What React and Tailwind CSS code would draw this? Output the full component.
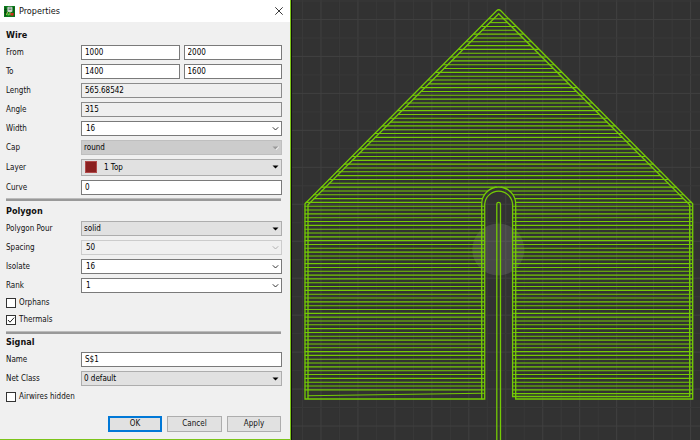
import { useState } from 'react';

const GREEN = '#74cb04';

const fieldBase =
  'h-[15px] w-full min-w-0 rounded-none border px-[3px] text-[8px] leading-3 text-black outline-none';

const Field = ({ id, label, children }) => (
  <div className="flex items-center">
    <label htmlFor={id} className="w-[75px] shrink-0 leading-3">{label}</label>
    <div className="flex min-w-0 flex-1 gap-1">{children}</div>
  </div>
);

const TextBox = ({ readOnly, ...props }) => (
  <input
    type="text"
    readOnly={readOnly}
    className={`${fieldBase} ${readOnly ? 'border-[#8c8c8c] bg-[#efefef]' : 'border-[#7a7a7a] bg-white'}`}
    {...props}
  />
);

// editable combos have a thin chevron, plain drop-downs a filled triangle
const Combo = ({ id, options, disabled }) => (
  <div className="relative w-full">
    <select
      id={id}
      disabled={disabled}
      className={`block h-[15px] w-full appearance-none border pl-1 pr-4 text-[8px] leading-[13px] text-black opacity-100 outline-none ${
        disabled ? 'border-[#cccccc] bg-[#f0f0f0]' : 'border-[#7a7a7a] bg-white'
      }`}
    >
      {options.map((o) => <option key={o}>{o}</option>)}
    </select>
    <svg className="pointer-events-none absolute right-[3px] top-[5px] h-[6px] w-[7px]" viewBox="0 0 7 6" fill="none" stroke={disabled ? '#b0b0b0' : '#333333'}>
      <path d="M.8 1.3 3.5 4 6.2 1.3" />
    </svg>
  </div>
);

const DropDown = ({ id, options, disabled, swatch }) => (
  <div className="relative w-full">
    <select
      id={id}
      disabled={disabled}
      className={`block w-full appearance-none border pr-4 text-[8px] text-black opacity-100 outline-none ${
        swatch ? 'h-[17px] pl-[22px] leading-[15px]' : 'h-[15px] pl-[2px] leading-[13px]'
      } ${disabled ? 'border-[#bfbfbf] bg-[#cccccc]' : 'border-[#adadad] bg-[#e1e1e1]'}`}
    >
      {options.map((o) => <option key={o}>{o}</option>)}
    </select>
    {swatch && <span className="pointer-events-none absolute left-1 top-[2px] size-3 border border-[#b04a4a] bg-[#8b2020]" />}
    <svg className="pointer-events-none absolute right-[3px] top-[6px] h-[4px] w-[7px]" viewBox="0 0 7 4">
      <path d="M.5 .5H6.5L3.5 3.5Z" fill={disabled ? '#9a9a9a' : '#000000'} />
      {disabled && <path d="M3.5 4 6.8 .8" stroke="#ffffff" />}
    </svg>
  </div>
);

const CheckBox = ({ label, checked, onChange }) => (
  <label className="flex items-center gap-[3px] leading-[10px]">
    <span className="relative size-[10px]">
      <input
        type="checkbox"
        checked={checked}
        onChange={(e) => onChange(e.target.checked)}
        className="block size-[10px] appearance-none border border-[#333333] bg-white"
      />
      {checked && (
        <svg className="pointer-events-none absolute inset-0" viewBox="0 0 10 10" fill="none" stroke="#222222">
          <path d="M2 5 4 7.2 8.2 2.6" />
        </svg>
      )}
    </span>
    {label}
  </label>
);

const Heading = ({ children }) => <h2 className="text-[9px] font-bold leading-3">{children}</h2>;

const Rule = () => <hr className="mr-px h-[3px] border-0 border-t border-[#bcbcbc] bg-[#999999]" />;

const AppIcon = () => (
  <svg className="size-[11px]" viewBox="0 0 11 11">
    <rect width="11" height="11" fill="#0c7a1c" />
    <path d="M1.5 1v9M0 3.5h3M0 6.5h3M9.8 1v9" stroke="#064a10" strokeWidth=".8" />
    <rect x="3.4" y=".8" width="5" height="5.2" rx="1" fill="#c8d4cc" />
    <path d="M4.6 2h2.8M4.6 3.5h2.8" stroke="#4d6355" strokeWidth=".7" />
    <path d="M3.5 6 2.5 9M6 6v3" stroke="#e8e060" strokeWidth=".8" />
    <rect x="6.6" y="7" width="3" height="2.6" fill="#d52a1a" />
    <rect x="3.6" y="7.6" width="1.8" height="1.8" fill="#59d14a" />
  </svg>
);

const PropertiesDialog = () => {
  const [orphans, setOrphans] = useState(false);
  const [thermals, setThermals] = useState(true);
  const [airwires, setAirwires] = useState(false);

  return (
    <form
      onSubmit={(e) => e.preventDefault()}
      className="flex w-[291px] shrink-0 flex-col border-b border-r border-[#7cc41a] bg-[#f0f0f0] text-[8px] text-[#111111]"
    >
      <header className="flex h-[22px] items-center gap-1 bg-white pl-1 pr-[7px]">
        <AppIcon />
        <h1 className="text-[9px] leading-3">Properties</h1>
        <button type="button" aria-label="Close" className="ml-auto">
          <svg className="size-2" viewBox="0 0 8 8" stroke="#222222" strokeWidth=".9">
            <path d="M.3 .3 7.7 7.7M7.7 .3 .3 7.7" />
          </svg>
        </button>
      </header>

      <div className="flex flex-col pb-[7px] pl-[6px] pr-2 pt-[7px]">
        <section className="flex flex-col gap-1 pb-[3px]">
          <Heading>Wire</Heading>
          <Field id="from" label="From">
            <TextBox id="from" defaultValue="1000" />
            <TextBox aria-label="From y" defaultValue="2000" />
          </Field>
          <Field id="to" label="To">
            <TextBox id="to" defaultValue="1400" />
            <TextBox aria-label="To y" defaultValue="1600" />
          </Field>
          <Field id="length" label="Length"><TextBox id="length" readOnly defaultValue="565.68542" /></Field>
          <Field id="angle" label="Angle"><TextBox id="angle" readOnly defaultValue="315" /></Field>
          <Field id="width" label="Width"><Combo id="width" options={['16']} /></Field>
          <Field id="cap" label="Cap"><DropDown id="cap" disabled options={['round']} /></Field>
          <Field id="layer" label="Layer"><DropDown id="layer" swatch options={['1 Top']} /></Field>
          <Field id="curve" label="Curve"><TextBox id="curve" defaultValue="0" /></Field>
        </section>
        <Rule />

        <section className="flex flex-col gap-1 pb-[6px] pt-1">
          <Heading>Polygon</Heading>
          <Field id="pour" label="Polygon Pour"><DropDown id="pour" options={['solid']} /></Field>
          <Field id="spacing" label="Spacing"><Combo id="spacing" disabled options={['50']} /></Field>
          <Field id="isolate" label="Isolate"><Combo id="isolate" options={['16']} /></Field>
          <Field id="rank" label="Rank"><Combo id="rank" options={['1']} /></Field>
          <div className="flex flex-col gap-[7px] pt-px">
            <CheckBox label="Orphans" checked={orphans} onChange={setOrphans} />
            <CheckBox label="Thermals" checked={thermals} onChange={setThermals} />
          </div>
        </section>
        <Rule />

        <section className="flex flex-col gap-1 pt-[2px]">
          <Heading>Signal</Heading>
          <Field id="name" label="Name"><TextBox id="name" defaultValue="S$1" /></Field>
          <Field id="netclass" label="Net Class"><DropDown id="netclass" options={['0 default']} /></Field>
          <div className="pt-[2px]">
            <CheckBox label="Airwires hidden" checked={airwires} onChange={setAirwires} />
          </div>
        </section>

        <footer className="mr-px mt-[14px] flex justify-end gap-[5px]">
          <button type="submit" className="h-4 w-[54px] border-2 border-[#0078d7] bg-[#e1e1e1] leading-none">OK</button>
          <button type="button" className="h-4 w-[55px] border border-[#adadad] bg-[#e1e1e1] leading-none">Cancel</button>
          <button type="button" className="h-4 w-[54px] border border-[#adadad] bg-[#e1e1e1] leading-none">Apply</button>
        </footer>
      </div>
    </form>
  );
};

const CX = 207.7;

// horizontal fill strokes of the pour, split in two below the top of the slot
const hatch = [];
for (let n = 0; n < 99; n++) {
  const y = 18.8 + n * 3.825;
  const inset = n % 2 ? 4 : 0;
  const half = y < 204 ? y - 9.3 - inset : 194;
  if (y < 187) {
    hatch.push([CX - half, CX + half, y]);
    continue;
  }
  const slot = y < 204 ? Math.sqrt(289 - (204 - y) ** 2) : 14;
  if (n < 98) hatch.push([CX - half, CX - slot, y]);
  hatch.push([CX + slot, CX + half, y]);
}

const gridX = Array.from({ length: 22 }, (_, i) => 11.5 + i * 18.48);
const gridY = Array.from({ length: 24 }, (_, i) => 1 + i * 18.48);

const Board = () => (
  <main className="relative min-w-0 flex-1 bg-[#323232]">
    <svg className="absolute inset-0 h-full w-full" viewBox="0 0 409 440" preserveAspectRatio="xMinYMin slice">
      {gridX.map((x, i) => (
        <path key={x} d={`M${x} 0V440`} stroke={i % 2 ? '#404040' : '#393939'} />
      ))}
      {gridY.map((y, i) => (
        <path key={y} d={`M0 ${y}H409`} stroke={i % 2 ? '#404040' : '#393939'} />
      ))}
      <path d="M.5 0V440" stroke="#111111" />
      <circle cx="207.3" cy="249.5" r="26" fill="#ffffff" opacity=".11" />
      <g stroke={GREEN} strokeWidth="1.1" fill="none">
        {hatch.map(([x1, x2, y], i) => <path key={i} d={`M${x1} ${y}H${x2}`} />)}
        <g strokeWidth="1.3">
          <path d="M14 399V203.8L205.6 10.8Q207.7 8.7 209.8 10.8L401.7 203.8V399H224.7V204A17 17 0 0 0 190.7 204V399Z" />
          <path d="M17 399V204.8L207.7 13.7 398.7 204.8V396.5H221.6V204A14 14 0 0 0 193.7 204V399H190.7" />
          <path d="M205.8 440V204Q205.8 202.3 207.6 202.3T209.5 204V440" />
        </g>
        <path d="M16.6 395.8 190.5 393.3H193.7" />
      </g>
    </svg>
  </main>
);

const App = () => (
  <div className="flex min-h-screen bg-[#323232] font-['DejaVu_Sans_Condensed','DejaVu_Sans',sans-serif]">
    <PropertiesDialog />
    <Board />
  </div>
);

export default App;
